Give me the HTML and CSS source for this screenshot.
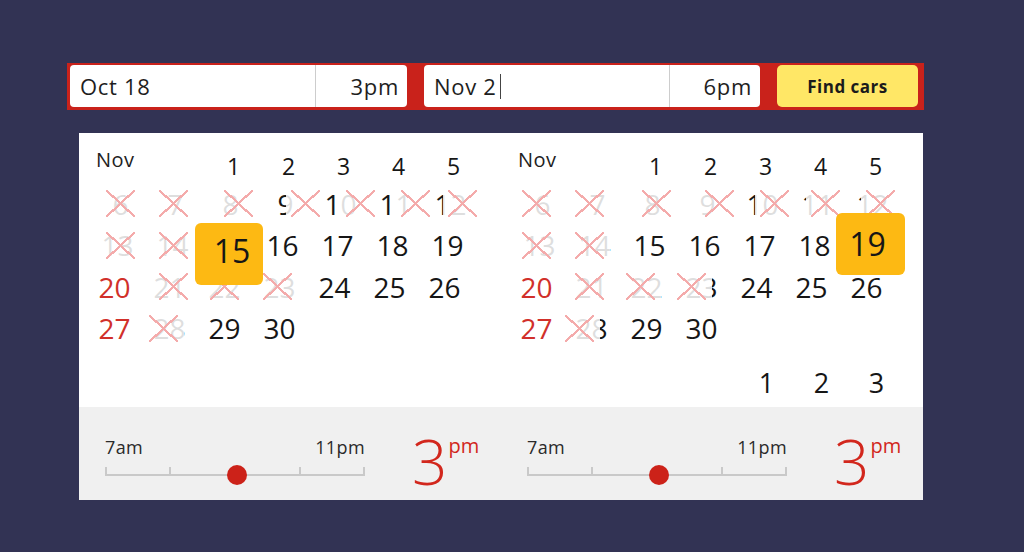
FILE: index.html
```html
<!DOCTYPE html>
<html lang="en">
<head>
<meta charset="utf-8">
<title>Find cars</title>
<link rel="stylesheet" href="styles.css">
</head>
<body>
<div class="page">
  <form class="search">
    <div class="field">
      <div class="f-date">Oct 18</div>
      <div class="f-time">3pm</div>
    </div>
    <div class="field field-b">
      <div class="f-date">Nov 2<span class="caret"></span></div>
      <div class="f-time">6pm</div>
    </div>
    <button class="find" type="button">Find cars</button>
  </form>

  <div class="picker">
    <div class="months">
      <div class="cal">
        <div class="mlabel">Nov</div>
        <div class="c h">1</div><div class="c h">2</div><div class="c h">3</div><div class="c h">4</div><div class="c h">5</div>

        <div class="c r2 x s6">6</div><div class="c r2 x s4">7</div><div class="c r2 x s14">8</div><div class="c r2 x s26">9</div><div class="c r2 x s26">10</div><div class="c r2 x s26">11</div><div class="c r2 x s18">12</div>

        <div class="c r3 x s6">13</div><div class="c r3 x s4">14</div><div class="c sel"><span class="box box-l">15</span></div><div class="c r3">16</div><div class="c r3">17</div><div class="c r3">18</div><div class="c r3">19</div>

        <div class="c we">20</div><div class="c x s4">21</div><div class="c x s0">22</div><div class="c x sm2">23</div><div class="c">24</div><div class="c">25</div><div class="c">26</div>

        <div class="c we">27</div><div class="c x sm6">28</div><div class="c">29</div><div class="c">30</div>
      </div>

      <div class="cal">
        <div class="mlabel">Nov</div>
        <div class="c h">1</div><div class="c h">2</div><div class="c h">3</div><div class="c h">4</div><div class="c h">5</div>

        <div class="c r2 x s0">6</div><div class="c r2 x sm2">7</div><div class="c r2 x s10">8</div><div class="c r2 x s18">9</div><div class="c r2 x s18">10</div><div class="c r2 x s14">11</div><div class="c r2 x s14">12</div>

        <div class="c r3 x s0">13</div><div class="c r3 x sm2">14</div><div class="c r3">15</div><div class="c r3">16</div><div class="c r3">17</div><div class="c r3">18</div><div class="c sel"><span class="box box-r">19</span></div>

        <div class="c we">20</div><div class="c x sm2">21</div><div class="c x sm6">22</div><div class="c x sm10">23</div><div class="c">24</div><div class="c">25</div><div class="c">26</div>

        <div class="c we">27</div><div class="c x sm12">28</div><div class="c">29</div><div class="c">30</div><div class="c"></div><div class="c"></div><div class="c"></div>

        <div class="c"></div><div class="c"></div><div class="c"></div><div class="c"></div><div class="c nx">1</div><div class="c nx">2</div><div class="c nx">3</div>
      </div>
    </div>

    <div class="foot">
      <div class="half">
        <div class="slider">
          <div class="labels"><span>7am</span><span>11pm</span></div>
          <div class="track">
            <span class="tick t0"></span><span class="tick t25"></span><span class="tick t75"></span><span class="tick t100"></span>
            <span class="dot"></span>
          </div>
        </div>
        <div class="time"><span class="big">3</span><span class="ampm">pm</span></div>
      </div>
      <div class="half">
        <div class="slider">
          <div class="labels"><span>7am</span><span>11pm</span></div>
          <div class="track">
            <span class="tick t0"></span><span class="tick t25"></span><span class="tick t75"></span><span class="tick t100"></span>
            <span class="dot"></span>
          </div>
        </div>
        <div class="time"><span class="big">3</span><span class="ampm">pm</span></div>
      </div>
    </div>
  </div>
</div>
</body>
</html>
```

FILE: styles.css
```css
* { box-sizing: border-box; }

body {
  margin: 0;
  background: #323354;
  font-family: "Open Sans", "Noto Sans", sans-serif;
  color: #1b1b1b;
}

.page {
  padding: 63px 0 0 67px;
}

/* ---------- search bar ---------- */
.search {
  display: flex;
  gap: 17px;
  width: 857px;
  height: 47px;
  margin: 0;
  padding: 2px 6px 3px 3px;
  background: #c9221b;
}

.field {
  display: flex;
  width: 337px;
  background: #fff;
  border-radius: 4px;
  font-size: 22px;
  font-weight: 500;
  letter-spacing: 0.7px;
  color: #1e1e1e;
}

.field-b { width: 336px; }

.f-date {
  display: flex;
  align-items: center;
  width: 246px;
  padding-left: 10px;
  border-right: 1px solid #cdcdcd;
}

.caret {
  display: inline-block;
  width: 1px;
  height: 25px;
  margin-left: 3px;
  background: #444;
}

.f-time {
  flex: 1;
  display: flex;
  align-items: center;
  justify-content: flex-end;
  padding-right: 8px;
}

.find {
  width: 141px;
  padding: 0;
  border: 0;
  border-radius: 5px;
  background: #ffe766;
  font-family: "Open Sans", "Noto Sans", sans-serif;
  font-size: 17px;
  font-weight: 700;
  letter-spacing: 0.5px;
  color: #1b1b1b;
}

/* ---------- picker ---------- */
.picker {
  width: 844px;
  margin: 23px 0 0 12px;
  background: #fff;
}

.months {
  display: flex;
  gap: 37px;
  height: 274px;
  padding: 14px 0 0 8px;
}

.cal {
  display: grid;
  grid-template-columns: repeat(7, 55px);
  grid-template-rows: 36px repeat(4, 41.5px) 54px;
  align-content: start;
}

.mlabel {
  grid-column: span 2;
  padding: 3px 0 0 9px;
  font-size: 20px;
  font-weight: 500;
  line-height: 1;
  letter-spacing: 0.4px;
  color: #222;
}

.c {
  position: relative;
  display: flex;
  align-items: center;
  justify-content: center;
  font-size: 28px;
  font-weight: 500;
  line-height: 1;
  color: #161616;
}

.c.h {
  font-size: 23px;
  padding-left: 18px;
  padding-top: 2px;
}

.c.r2 { padding-left: 12px; }
.c.r3 { padding-left: 6px; }

.c.we { color: #d1302a; }

.c.nx {
  align-self: end;
  height: 41px;
  font-size: 27px;
  padding-left: 20px;
}

/* crossed-out (unavailable) days */
.x { --s: 0px; }
.x::before {
  content: "";
  position: absolute;
  z-index: 1;
  left: calc(50% - 20px + var(--s));
  top: calc(50% - 18px);
  width: 40px;
  height: 36px;
  background: rgba(255, 255, 255, 0.86);
}
.x::after {
  content: "";
  position: absolute;
  z-index: 1;
  left: calc(50% - 14.5px + var(--s));
  top: calc(50% - 13.5px);
  width: 29px;
  height: 27px;
  background:
    linear-gradient(to top right, transparent calc(50% - 1.1px), #f4abab calc(50% - 1.1px), #f4abab calc(50% + 1.1px), transparent calc(50% + 1.1px)),
    linear-gradient(to bottom right, transparent calc(50% - 1.1px), #f4abab calc(50% - 1.1px), #f4abab calc(50% + 1.1px), transparent calc(50% + 1.1px));
}

.sm12 { --s: -12px; }
.sm10 { --s: -10px; }
.sm6 { --s: -6px; }
.sm2 { --s: -2px; }
.s0 { --s: 0px; }
.s4 { --s: 4px; }
.s6 { --s: 6px; }
.s10 { --s: 10px; }
.s14 { --s: 14px; }
.s18 { --s: 18px; }
.s26 { --s: 26px; }

/* selected day */
.box {
  position: absolute;
  z-index: 2;
  display: flex;
  align-items: center;
  justify-content: center;
  background: #fdb913;
  border-radius: 6px;
  font-size: 32px;
  color: #161616;
}

.box-l {
  left: -2px;
  top: -1.5px;
  width: 68px;
  height: 62px;
  padding: 0 0 7px 6px;
}

.box-r {
  left: -3px;
  top: -11.5px;
  width: 69px;
  height: 62px;
  padding: 0 6px 0 0;
}

/* ---------- time sliders ---------- */
.foot {
  display: flex;
  height: 93px;
  background: #f0f0f0;
}

.half {
  display: flex;
  width: 422px;
  padding-left: 26px;
}

.slider {
  width: 260px;
  padding-top: 30px;
}

.labels {
  display: flex;
  justify-content: space-between;
  font-size: 18px;
  font-weight: 500;
  line-height: 20px;
  letter-spacing: 0.4px;
  color: #2a2a2a;
}

.track {
  position: relative;
  height: 20px;
  margin-top: 8px;
  background: linear-gradient(#c9c9c9, #c9c9c9) 0 9px / 100% 2px no-repeat;
}

.tick {
  position: absolute;
  top: 2px;
  width: 2px;
  height: 9px;
  background: #c9c9c9;
}
.t0 { left: 0; }
.t25 { left: 64px; }
.t75 { left: 194px; }
.t100 { right: 0; }

.dot {
  position: absolute;
  top: 0;
  left: 122px;
  width: 20px;
  height: 20px;
  border-radius: 50%;
  background: #cc2219;
}

.time {
  display: flex;
  align-items: flex-start;
  margin: 23px 0 0 47px;
  color: #d2271d;
}

.big {
  font-size: 62px;
  font-weight: 300;
  line-height: 1;
}

.ampm {
  margin: 6px 0 0 1px;
  font-size: 20px;
  line-height: 1;
}
```
